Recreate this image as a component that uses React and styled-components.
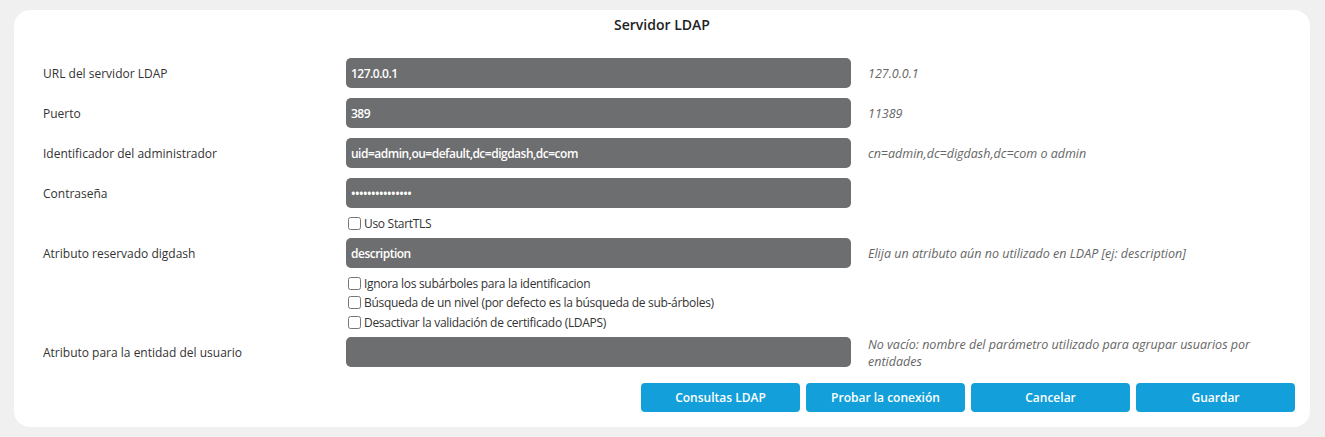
import React from "react";
import styled, { createGlobalStyle } from "styled-components";

const Global = createGlobalStyle`
  html, body { margin: 0; padding: 0; background: #f0f0f0; }
  body { font-family: "Open Sans", "Noto Sans", sans-serif; color: #333; }
`;

const Page = styled.div`
  padding: 10px 15px 10px 14px;
  width: 1325px;
  box-sizing: border-box;
`;

const Card = styled.div`
  background: #fff;
  border-radius: 16px;
  padding: 4px 15px 15px 29px;
  height: 417px;
  box-sizing: border-box;
`;

const Title = styled.div`
  text-align: center;
  font-size: 14px;
  font-weight: 600;
  line-height: 22px;
  color: #222;
  margin-left: -14px;
`;

const Form = styled.div`
  margin-top: 17px;
  display: flex;
  flex-direction: column;
`;

const Row = styled.div`
  display: grid;
  grid-template-columns: 286px 505px 1fr;
  column-gap: 17px;
  align-items: center;
  padding: 5px 0;
`;

const Label = styled.div`
  font-size: 12px;
  color: #333;
`;

const Field = styled.input`
  height: 30px;
  box-sizing: border-box;
  border: none;
  border-radius: 5px;
  background: #6d6e70;
  color: #fff;
  font-family: "Open Sans", sans-serif;
  font-size: 12px;
  font-weight: 600;
  letter-spacing: -0.5px;
  padding: 0 5px;
  outline: none;
  width: 100%;
`;

const Hint = styled.div`
  font-size: 12.5px;
  font-style: italic;
  color: #666;
  line-height: 17px;
  align-self: ${(p) => (p.$top ? "start" : "center")};
  margin: ${(p) => (p.$top ? "-1px 0 -5px" : "0")};
`;

const CheckRow = styled.label`
  display: flex;
  align-items: center;
  height: ${(p) => p.$h || 20}px;
  margin-left: 303px;
  font-size: 12px;
  letter-spacing: -0.3px;
  color: #333;
  input {
    margin: 0 3px 0 2px;
    width: 13px;
    height: 13px;
  }
`;

const Buttons = styled.div`
  display: flex;
  justify-content: flex-end;
  gap: 6px;
  margin-top: 11px;
`;

const Button = styled.button`
  width: 159px;
  height: 29px;
  border: none;
  border-radius: 4px;
  background: #13a0da;
  color: #fff;
  font-family: "Open Sans", sans-serif;
  font-size: 12px;
  font-weight: 600;
  cursor: pointer;
`;

const rowsTop = [
  { label: "URL del servidor LDAP", value: "127.0.0.1", hint: "127.0.0.1" },
  { label: "Puerto", value: "389", hint: "11389" },
  {
    label: "Identificador del administrador",
    value: "uid=admin,ou=default,dc=digdash,dc=com",
    hint: "cn=admin,dc=digdash,dc=com o admin",
  },
  { label: "Contraseña", value: "•••••••••••••••", hint: "" },
];

export default function App() {
  return (
    <Page>
      <Global />
      <Card>
        <Title>Servidor LDAP</Title>
        <Form>
          {rowsTop.map((r) => (
            <Row key={r.label}>
              <Label>{r.label}</Label>
              <Field defaultValue={r.value} />
              <Hint>{r.hint}</Hint>
            </Row>
          ))}
          <CheckRow>
            <input type="checkbox" />
            Uso StartTLS
          </CheckRow>
          <Row>
            <Label>Atributo reservado digdash</Label>
            <Field defaultValue="description" />
            <Hint>Elija un atributo aún no utilizado en LDAP [ej: description]</Hint>
          </Row>
          <CheckRow>
            <input type="checkbox" />
            Ignora los subárboles para la identificacion
          </CheckRow>
          <CheckRow $h={19}>
            <input type="checkbox" />
            Búsqueda de un nivel (por defecto es la búsqueda de sub-árboles)
          </CheckRow>
          <CheckRow>
            <input type="checkbox" />
            Desactivar la validación de certificado (LDAPS)
          </CheckRow>
          <Row>
            <Label>Atributo para la entidad del usuario</Label>
            <Field defaultValue="" />
            <Hint $top>
              No vacío: nombre del parámetro utilizado para agrupar usuarios por entidades
            </Hint>
          </Row>
        </Form>
        <Buttons>
          <Button>Consultas LDAP</Button>
          <Button>Probar la conexión</Button>
          <Button>Cancelar</Button>
          <Button>Guardar</Button>
        </Buttons>
      </Card>
    </Page>
  );
}
